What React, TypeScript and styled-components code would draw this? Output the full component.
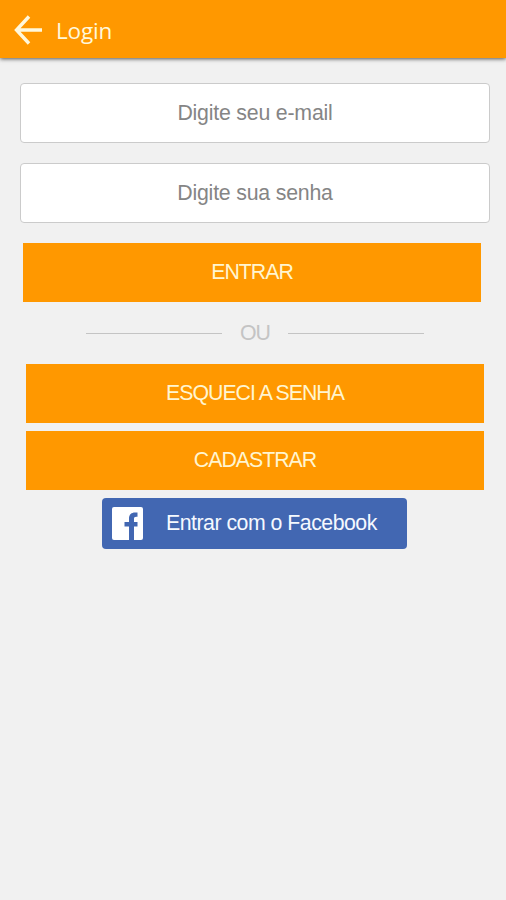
import React from "react";
import styled, { createGlobalStyle } from "styled-components";

const GlobalStyle = createGlobalStyle`
  * { box-sizing: border-box; }
  body { margin: 0; background: #f1f1f1; }
`;

const Screen = styled.div`
  display: flex;
  flex-direction: column;
  width: 506px;
  height: 900px;
  background: #f1f1f1;
  font-family: "Liberation Sans", Arial, sans-serif;
  font-size: 21.3px;
`;

const Header = styled.header`
  display: flex;
  align-items: center;
  flex: none;
  height: 58px;
  padding: 3px 0 0 14px;
  gap: 13px;
  background: #ff9800;
  box-shadow: 0 1px 4px rgba(0, 0, 0, 0.65);
`;

const Title = styled.h1`
  margin: 0;
  color: #fff8dc;
  font: 400 22.5px "Open Sans", "Noto Sans", sans-serif;
  letter-spacing: -0.2px;
`;

const BackButton = styled.button`
  display: flex;
  margin-top: -2px;
  padding: 0;
  border: 0;
  background: none;
`;

const Form = styled.main`
  display: flex;
  flex-direction: column;
  align-items: flex-start;
  padding: 25px 16px 0 20px;
`;

const Field = styled.input`
  width: 470px;
  height: 60px;
  margin-bottom: 20px;
  padding: 0 10px;
  border: 1.5px solid #cbcbcb;
  border-radius: 4px;
  background: #fff;
  font: inherit;
  letter-spacing: -0.2px;
  text-align: center;
  outline: none;
  &::placeholder { color: #858585; opacity: 1; }
`;

const Action = styled.button<{ $inset: number; $gap: number }>`
  width: 458px;
  height: 59px;
  margin: 0 0 ${(p) => p.$gap}px ${(p) => p.$inset}px;
  padding: 0;
  border: 0;
  background: #ff9800;
  color: #fff5d0;
  font: inherit;
  letter-spacing: -1px;
`;

const Divider = styled.div`
  display: flex;
  align-items: center;
  justify-content: space-between;
  width: 338px;
  height: 62px;
  margin-left: 66px;
  color: #c4c4c4;
  letter-spacing: -1px;
`;

const Rule = styled.span`
  width: 136px;
  height: 1px;
  background: #c4c4c4;
`;

const FacebookButton = styled.button`
  display: flex;
  align-items: center;
  width: 305px;
  height: 51px;
  margin-left: 82px;
  padding: 0 0 0 10px;
  gap: 23px;
  border: 0;
  border-radius: 4px;
  background: #4267b2;
  color: #f5f9ff;
  font: inherit;
  letter-spacing: -0.5px;
`;

export default function App() {
  return (
    <>
      <GlobalStyle />
      <Screen>
        <Header>
          <BackButton aria-label="Voltar">
            <svg width="29" height="30" viewBox="0 0 29 30" fill="none" stroke="#fff8dc" strokeWidth="3.4">
              <path d="M15 1.5 2.5 15 15 28.5M3 15h25" />
            </svg>
          </BackButton>
          <Title>Login</Title>
        </Header>
        <Form>
          <Field type="email" placeholder="Digite seu e-mail" />
          <Field type="password" placeholder="Digite sua senha" />
          <Action $inset={3} $gap={0}>ENTRAR</Action>
          <Divider>
            <Rule />
            <span>OU</span>
            <Rule />
          </Divider>
          <Action $inset={6} $gap={8}>ESQUECI A SENHA</Action>
          <Action $inset={6} $gap={8}>CADASTRAR</Action>
          <FacebookButton>
            <svg width="31" height="33" viewBox="0 0 31 33">
              <rect width="31" height="33" rx="2" fill="#fff" />
              <path
                d="M17 33V19.500h-4.500v-4.500H17v-3.500c0-4 2.500-6 6-6h2.500v4.200h-1.200c-1.800 0-2.300.8-2.300 2.300v3h3.500v4.500H22V33z"
                fill="#4267b2"
              />
            </svg>
            <span>Entrar com o Facebook</span>
          </FacebookButton>
        </Form>
      </Screen>
    </>
  );
}
